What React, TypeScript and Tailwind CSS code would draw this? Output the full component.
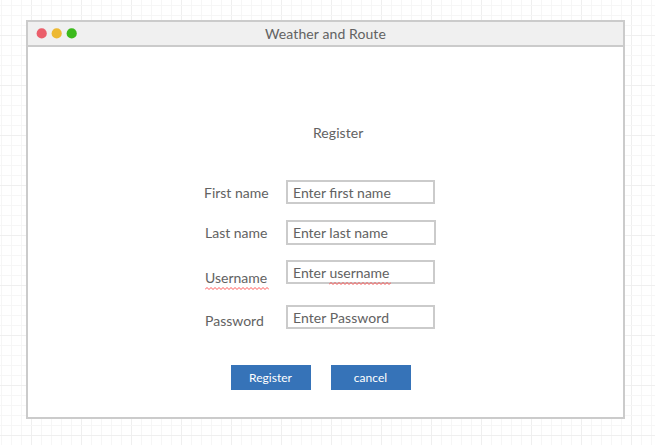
import type { ReactNode } from "react";

const GRID_X = Array.from({ length: 66 }, (_, i) => 1 + i * 10);
const GRID_Y = Array.from({ length: 44 }, (_, i) => 5 + i * 10);

function CanvasGrid() {
  return (
    <svg className="absolute inset-0 h-full w-full" shapeRendering="crispEdges" aria-hidden="true">
      {GRID_X.map((x) => (
        <rect key={x} x={x} y={0} width={1} height={445} fill={x % 50 === 31 ? "#efefef" : "#f6f6f6"} />
      ))}
      {GRID_Y.map((y) => (
        <rect key={y} x={0} y={y} width={655} height={1} fill={y % 50 === 35 ? "#efefef" : "#f6f6f6"} />
      ))}
    </svg>
  );
}

function Misspelled({ children, width, lineClass }: { children: ReactNode; width: number; lineClass: string }) {
  let d = "M0 2.5";
  for (let x = 2; x <= width; x += 2) d += ` L${x} ${x % 4 === 2 ? 0.5 : 2.5}`;
  return (
    <span className="relative">
      {children}
      <svg className={`absolute left-0 ${lineClass}`} width={width} height={3} aria-hidden="true">
        <path d={d} fill="none" stroke="#ff3b3b" strokeOpacity={0.85} strokeWidth={1} />
      </svg>
    </span>
  );
}

function Field({ label, labelClass, boxClass, children }: { label: ReactNode; labelClass: string; boxClass: string; children: ReactNode }) {
  return (
    <div className="flex items-start">
      <div className={`w-[82px] shrink-0 ${labelClass}`}>{label}</div>
      <div className={`shrink-0 border-2 border-[#cbcbcb] bg-white pl-[5px] leading-[22px] ${boxClass}`}>{children}</div>
    </div>
  );
}

export default function App() {
  return (
    <div className="relative h-[445px] w-[655px] overflow-hidden bg-white pt-5 pl-[26px] font-['Lato',sans-serif] text-[14px] leading-[20px] text-[#626262]">
      <CanvasGrid />
      <div className="relative h-[399px] w-[599px] border-2 border-[#cbcbcb] bg-white">
        <header className="grid h-[25px] grid-cols-[1fr_auto_1fr] items-center border-b-2 border-[#cbcbcb] bg-[#f0f0f0]">
          <svg className="h-[23px] w-[60px]" viewBox="0 0 60 23" aria-hidden="true">
            <circle cx="13.7" cy="11.4" r="5.1" fill="#eb5f6b" />
            <circle cx="28.7" cy="11.4" r="5.1" fill="#edb933" />
            <circle cx="43.7" cy="11.4" r="5.1" fill="#3cba1c" />
          </svg>
          <h1 className="tracking-[0.1px]">Weather and Route</h1>
        </header>
        <main>
          <h2 className="pt-[76px] pl-[285px] tracking-[0.05px]">Register</h2>
          <div className="flex flex-col pt-[37px] pl-[176px]">
            <Field label="First name" labelClass="pt-[3px]" boxClass="h-6 w-[149px]">Enter first name</Field>
            <div className="h-4" />
            <Field label="Last name" labelClass="pt-[3px] pl-px" boxClass="h-[25px] w-[150px]">Enter last name</Field>
            <div className="h-[15px]" />
            <Field
              label={<Misspelled width={64} lineClass="top-[18px]">Username</Misspelled>}
              labelClass="pt-2 pl-px"
              boxClass="h-6 w-[149px]"
            >
              Enter <Misspelled width={62} lineClass="top-[18px]">username</Misspelled>
            </Field>
            <div className="h-[17px]" />
            <Field label="Password" labelClass="pt-[6px] pl-px" boxClass="h-6 w-[149px] tracking-[0.07px]">Enter Password</Field>
          </div>
          <div className="flex gap-5 pt-[34px] pl-[203px] text-[12px] leading-[25px] tracking-[0.03px] text-white">
            <button className="h-[25px] w-20 bg-[#3673b8] pr-px">Register</button>
            <button className="h-[25px] w-20 bg-[#3673b8] pr-px">cancel</button>
          </div>
        </main>
      </div>
    </div>
  );
}
